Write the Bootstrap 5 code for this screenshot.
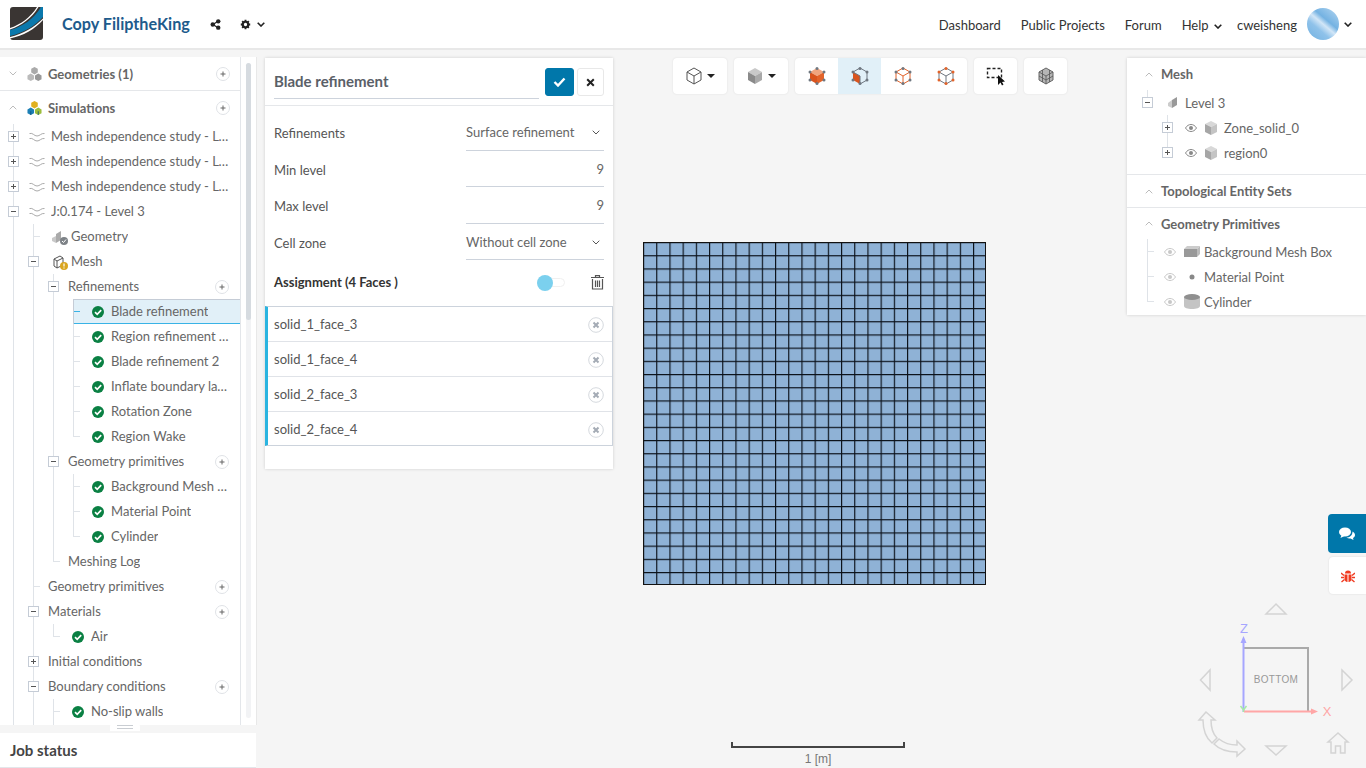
<!DOCTYPE html>
<html lang="en">
<head>
  <meta charset="UTF-8">
  <title>Copy FiliptheKing</title>
  <link href="https://cdn.jsdelivr.net/npm/bootstrap@5.3.0/dist/css/bootstrap.min.css" rel="stylesheet">
  <style>
    html, body { height: 100%; }
    body { background: #f5f5f5; font-family: Lato, "Liberation Sans", sans-serif; font-size: 13px; color: #666; overflow: hidden; }

    /* top bar */
    .top-bar { height: 50px; background: #fff; border-bottom: 2px solid #e8e8e8; padding: 0 14px 0 10px; }
    .brand-logo { width: 33px; height: 33px; margin-top: -1px; }
    .brand-name { font-size: 16.2px; font-weight: 700; color: #1e5b8c; margin-left: 19px; }
    .top-link { color: #333; text-decoration: none; font-size: 13px; padding-top: 4px; }
    .top-links { gap: 20px; }
    .avatar { width: 32px; height: 32px; border-radius: 50%; background: linear-gradient(40deg, #6fb0e0 0%, #8fc2ea 35%, #d2e6f7 50%, #74b2e2 62%, #b7d8f2 100%); }

    /* side panel */
    .work-area { height: 718px; }
    .side-col { width: 257px; flex: none; padding-top: 7px; }
    .side-panel { height: 668px; background: #fff; border-right: 1px solid #e8e8e8; }
    .tree-wrap { width: 241px; border-right: 1px solid #e3e6ea; overflow: hidden; flex: none; }
    .scroll-track { width: 6px; margin: 6px 5px 7px; background: #f2f3f5; border-radius: 3px; }
    .scroll-thumb { height: 257px; background: #d6dbe0; border-radius: 3px; }
    .section-head { height: 34px; padding: 0 10px 0 9px; font-weight: 700; color: #666; }
    .section-head span { padding-top: 2px; }
    .section-head.short-head { height: 33px; }
    .section-line { border-bottom: 1px solid #e5e7ea; }
    .section-head .head-icon { margin: 0 6px 0 10px; }
    .tree-list { list-style: none; margin: 0 0 0 20px; padding: 0; }
    .tree-root { margin-left: 13px; }
    .tree-list > li { background: linear-gradient(#dfe3e8, #dfe3e8) left top / 1px 100% no-repeat; }
    .tree-list > li:last-child { background-size: 1px 13px; }
    .node-row { height: 25px; display: flex; align-items: center; padding-right: 11px; white-space: nowrap; }
    .node-row.selected { background: #e1f0f8; box-shadow: inset 1px 1px 0 #c5ccd6, inset 0 -1px 0 #39b3e6; }
    .node-tog { width: 11px; height: 11px; margin: 0 2px 0 -5px; flex: none; display: block; }
    .node-dash { width: 6px; height: 1px; margin: 0 1px 0 1px; background: #dfe3e8; flex: none; }
    .selected .node-dash { background: #39b3e6; }
    .node-label { margin-left: 7px; min-width: 0; overflow: hidden; text-overflow: ellipsis; }
    .ok-icon { width: 12px; height: 12px; flex: none; margin-left: 11px; }
    .ok-icon + .node-label { margin-left: 7px; }
    .wave-icon { width: 16px; height: 10px; margin-left: 8px; flex: none; }
    .wave-icon + .node-label { margin-left: 6px; }
    .geo-icon { width: 18px; height: 18px; margin-left: 10px; flex: none; }
    .geo-icon + .node-label { margin-left: 2px; }
    .add-btn { width: 14px; height: 14px; margin-left: auto; flex: none; }
    .drag-strip { height: 8px; position: relative; }
    .drag-tab { position: absolute; left: 110px; top: -2px; width: 30px; height: 8px; background: #fff; border-radius: 4px 4px 0 0; }
    .drag-tab::after { content: ""; display: block; margin: 2px 7px 0; height: 4px; border-top: 1px solid #c9cdd2; border-bottom: 1px solid #c9cdd2; }
    .job-status { height: 35px; margin-right: 1px; background: #fff; border-bottom: 1px solid #e3e6ea; padding-left: 10px; font-size: 15px; font-weight: 700; color: #444; }

    /* viewer overlays */
    .viewer { position: relative; flex-grow: 1; }
    .float-card { position: absolute; background: #fff; box-shadow: 0 0 3px rgba(0, 0, 0, .16); }
    .dialog-card { left: 8px; top: 8px; width: 348px; height: 411px; }
    .dialog-head { height: 48px; padding: 10px 9px 0; border-bottom: 1px solid #e5e7ea; }
    .dialog-title { width: 265px; height: 31px; margin-right: 6px; font-size: 15px; font-weight: 700; color: #5a6068; border-bottom: 1px solid #cdd3dc; line-height: 27px; }
    .btn-ok { width: 29px; height: 28px; padding: 0; background: #0077aa; border-color: #0077aa; border-radius: 3px; }
    .btn-cancel { width: 27px; height: 28px; padding: 0; margin-left: 3px; background: #fff; border: 1px solid #e8e8e8; border-radius: 3px; }
    .dialog-body { padding: 8px 9px 0; }
    .form-line { height: 36.5px; color: #555; }
    .form-line > span { padding-top: 3px; }
    .form-value { width: 138px; height: 100%; border-bottom: 1px solid #cdd3dc; color: #666; padding-top: 2px; }
    .assign-line { height: 46px; padding-bottom: 2px; color: #333; }
    .assign-line strong { font-weight: 700; font-size: 13px; padding-top: 2px; }
    .switch-track { width: 28px; height: 9px; margin-right: 26px; position: relative; border: 1px solid #f0f0f0; border-radius: 5px; }
    .switch-knob { position: absolute; left: -1px; top: -4px; width: 16px; height: 16px; border-radius: 50%; background: #7bd0ee; }
    .face-list { border-radius: 0; border: 1px solid #ccd3dc; border-left: 3px solid #2ab4e0; }
    .face-item { height: 35px; padding: 2px 8px 0 6px; border: 0; border-bottom: 1px solid #e0e3e8; color: #555; border-radius: 0; }
    .face-item:last-child { height: 33px; border-bottom: 0; }

    .tool-strip { position: absolute; left: 416px; top: 8px; gap: 7px; }
    .tool-btn { height: 36px; padding: 0; background: #fff; border: 0; border-radius: 4px; box-shadow: 0 0 2px rgba(0, 0, 0, .1); --bs-btn-hover-bg: #fff; }
    .tool-btn.wide { width: 54px; }
    .tool-btn.single { width: 43px; }
    .tool-group { background: #fff; border-radius: 4px; box-shadow: 0 0 2px rgba(0, 0, 0, .1); height: 36px; overflow: hidden; }
    .tool-cell { width: 43px; height: 36px; }
    .tool-cell.active { background: #e1f0f8; }
    .caret-down { width: 0; height: 0; border-left: 4px solid transparent; border-right: 4px solid transparent; border-top: 4px solid #222; margin-left: 4px; }

    .scene-panel { right: 0; top: 8px; width: 239px; height: 257px; overflow: hidden; }
    .scene-head { height: 32px; padding-left: 18px; font-weight: 700; color: #666; gap: 8px; }
    .scene-head span, .scene-row span:not(.node-dash) { padding-top: 2px; }
    .scene-head.last-head { height: 31px; }
    .scene-head.mid-head { height: 33px; }
    .scene-sep { border-bottom: 1px solid #e5e7ea; }
    .scene-row { height: 25px; white-space: nowrap; }
    .scene-group { padding-bottom: 9px; }
    .guide-root { background: linear-gradient(#dfe3e8, #dfe3e8) 20px 0 / 1px 100% no-repeat; }
    .guide-root-end { background: linear-gradient(#dfe3e8, #dfe3e8) 20px 0 / 1px 13px no-repeat; }
    .guide-child { background: linear-gradient(#dfe3e8, #dfe3e8) 40px 0 / 1px 100% no-repeat; }
    .guide-child-end { background: linear-gradient(#dfe3e8, #dfe3e8) 40px 0 / 1px 13px no-repeat; }

    .mesh-plot { position: absolute; left: 386px; top: 192px; width: 343px; height: 343px; }
    .scale-bar { position: absolute; left: 474px; top: 692px; width: 174px; }
    .scale-line { height: 6px; border: 2px solid #444; border-top: 0; }
    .scale-text { font-family: "Liberation Sans", sans-serif; font-size: 12px; color: #777; text-align: center; margin-top: 4px; line-height: 14px; }

    .side-tabs { position: absolute; right: 0; top: 464px; width: 38px; gap: 4px; }
    .tab-chat { height: 39px; background: #0077aa; border-radius: 4px 0 0 4px; }
    .tab-bug { height: 37px; margin-left: 1px; background: #fff; border-radius: 4px 0 0 4px; box-shadow: 0 0 2px rgba(0, 0, 0, .12); }
    .nav-cube { position: absolute; left: 933px; top: 548px; width: 176px; height: 170px; }
  </style>
</head>
<body>

  <svg width="0" height="0" class="d-block" style="position:absolute">
    <defs>
      <symbol id="i-ok" viewBox="0 0 12 12"><circle cx="6" cy="6" r="6" fill="#0a8043"/><path d="M3 6.2l2.2 2.2L9.2 4.2" fill="none" stroke="#fff" stroke-width="1.7"/></symbol>
      <symbol id="i-add" viewBox="0 0 14 14"><circle cx="7" cy="7" r="6.5" fill="#fff" stroke="#dfe2e6"/><path d="M4.5 7h5M7 4.5v5" stroke="#666" stroke-width="1"/></symbol>
      <symbol id="i-plus" viewBox="0 0 11 11"><rect x=".5" y=".5" width="10" height="10" fill="#fff" stroke="#c5ccd6"/><path d="M3 5.5h5M5.5 3v5" stroke="#555"/></symbol>
      <symbol id="i-minus" viewBox="0 0 11 11"><rect x=".5" y=".5" width="10" height="10" fill="#fff" stroke="#c5ccd6"/><path d="M3 5.5h5" stroke="#555"/></symbol>
      <symbol id="i-wave" viewBox="0 0 16 10"><path d="M.5 1.5C4 .5 5 4 8 4s4-3 7.500-2.500M.5 6.500C4 5.500 5 9 8 9s4-3 7.500-2.500" fill="none" stroke="#aaa"/></symbol>
      <symbol id="i-cubes-gray" viewBox="0 0 16 16"><path d="M8 1l3.500 2v4L8 9 4.500 7V3z" fill="#aaa"/><path d="M4 8l3.500 2v4L4 16 .5 14v-4z" fill="#bbb"/><path d="M12 8l3.500 2v4L12 16l-3.500-2v-4z" fill="#999"/></symbol>
      <symbol id="i-cubes-color" viewBox="0 0 16 16"><path d="M8 1l3.500 2v4L8 9 4.500 7V3z" fill="#e0b020"/><path d="M4 8l3.500 2v4L4 16 .5 14v-4z" fill="#1c7fb5"/><path d="M12 8l3.500 2v4L12 16l-3.500-2v-4z" fill="#9cbe3c"/><path d="M4 12v4M12 12v4" stroke="#0d4f75" stroke-width=".8"/></symbol>
      <symbol id="i-chev" viewBox="0 0 8 5"><path d="M.7.7L4 4 7.300.7" fill="none" stroke="currentColor" stroke-width="1"/></symbol>
      <symbol id="i-chev-bold" viewBox="0 0 8 5"><path d="M.7.7L4 4 7.300.7" fill="none" stroke="currentColor" stroke-width="1.600"/></symbol>
      <symbol id="i-eye" viewBox="0 0 12 8"><path d="M.5 4C2 1.500 4 .5 6 .5s4 1 5.500 3.500C10 6.500 8 7.500 6 7.500S2 6.500.5 4z" fill="none" stroke="currentColor"/><circle cx="6" cy="4" r="2" fill="currentColor"/></symbol>
      <symbol id="i-cube" viewBox="0 0 14 14"><path d="M7 0l6 3-6 3-6-3z" fill="#d8d8d8"/><path d="M1 3l6 3v8l-6-3z" fill="#a6a6a6"/><path d="M13 3L7 6v8l6-3z" fill="#c4c4c4"/></symbol>
      <symbol id="i-x-circle" viewBox="0 0 16 16"><circle cx="8" cy="8" r="7.300" fill="#fff" stroke="#d5d9de"/><path d="M5.500 5.500l5 5M10.500 5.500l-5 5" stroke="#a4abb5" stroke-width="2"/></symbol>
    </defs>
  </svg>

  <nav class="top-bar d-flex align-items-center">
    <svg class="brand-logo" viewBox="0 0 33 33">
      <rect width="33" height="33" rx="3" fill="#3a3533"/>
      <path d="M0 23C12 20 24 12 31 0h2v10C25 19 13 26 0 29z" fill="#0a78ac"/>
      <path d="M0 21C10 18 21 10 27 0h1.500C22 11 11 19 0 22.500zM0 30C13 27 25 20 33 11.500V13C25 22 13 29 0 31.500z" fill="#fff"/>
    </svg>
    <span class="brand-name">Copy FiliptheKing</span>
    <svg width="11" height="11" viewBox="0 0 14 14" style="margin-left:20px"><path d="M10 3L4 7l6 4" fill="none" stroke="#222" stroke-width="1.500"/><circle cx="10.500" cy="3" r="2.800" fill="#222"/><circle cx="3.500" cy="7" r="2.800" fill="#222"/><circle cx="10.500" cy="11" r="2.800" fill="#222"/></svg>
    <svg width="11" height="11" viewBox="0 0 14 14" style="margin-left:19px"><circle cx="7" cy="7" r="3.500" fill="none" stroke="#222" stroke-width="2.800"/><path d="M7 1v2.500M7 10.500V13M1 7h2.500M10.500 7H13M2.800 2.800l1.800 1.800M9.400 9.400l1.800 1.800M11.200 2.800L9.400 4.600M4.600 9.400l-1.800 1.800" stroke="#222" stroke-width="2.400"/></svg>
    <svg width="8" height="5" style="color:#222;margin-left:6px"><use href="#i-chev-bold"/></svg>
    <div class="d-flex align-items-center ms-auto">
      <div class="d-flex top-links align-items-center">
        <a class="top-link" href="#">Dashboard</a>
        <a class="top-link" href="#">Public Projects</a>
        <a class="top-link" href="#">Forum</a>
        <a class="top-link" href="#">Help <svg width="8" height="5" style="color:#222;margin-left:2px"><use href="#i-chev-bold"/></svg></a>
      </div>
      <span class="top-link" style="margin-left:15px">cweisheng</span>
      <span class="avatar d-block" style="margin-left:10px"></span>
      <svg width="8" height="5" style="color:#222;margin-left:5px"><use href="#i-chev-bold"/></svg>
    </div>
  </nav>

  <div class="work-area d-flex">
    <aside class="side-col">
      <div class="side-panel d-flex">
        <div class="tree-wrap">
          <div class="section-head section-line d-flex align-items-center">
            <svg width="8" height="5" style="color:#bbb"><use href="#i-chev"/></svg>
            <svg class="head-icon" width="15" height="15"><use href="#i-cubes-gray"/></svg>
            <span>Geometries (1)</span>
            <svg class="add-btn"><use href="#i-add"/></svg>
          </div>
          <div class="section-head short-head d-flex align-items-center">
            <svg width="8" height="5" style="color:#bbb;transform:scaleY(-1)"><use href="#i-chev"/></svg>
            <svg class="head-icon" width="15" height="15"><use href="#i-cubes-color"/></svg>
            <span>Simulations</span>
            <svg class="add-btn"><use href="#i-add"/></svg>
          </div>
          <ul class="tree-list tree-root">
            <li><div class="node-row"><svg class="node-tog"><use href="#i-plus"/></svg><svg class="wave-icon"><use href="#i-wave"/></svg><span class="node-label">Mesh independence study - Level 1</span></div></li>
            <li><div class="node-row"><svg class="node-tog"><use href="#i-plus"/></svg><svg class="wave-icon"><use href="#i-wave"/></svg><span class="node-label">Mesh independence study - Level 2</span></div></li>
            <li><div class="node-row"><svg class="node-tog"><use href="#i-plus"/></svg><svg class="wave-icon"><use href="#i-wave"/></svg><span class="node-label">Mesh independence study - Level 3</span></div></li>
            <li>
              <div class="node-row"><svg class="node-tog"><use href="#i-minus"/></svg><svg class="wave-icon"><use href="#i-wave"/></svg><span class="node-label">J:0.174 - Level 3</span></div>
              <ul class="tree-list">
                <li><div class="node-row"><span class="node-dash"></span>
                  <svg class="geo-icon" viewBox="0 0 18 18"><path d="M5 6l5-3v9l-5 3z" fill="#aaa"/><path d="M1 10l4-2v7l-4-2z" fill="#c8c8c8"/><circle cx="13" cy="13" r="4" fill="#7d8287"/><path d="M11 13l1.500 1.500 2.500-3" fill="none" stroke="#fff"/></svg>
                  <span class="node-label">Geometry</span></div></li>
                <li>
                  <div class="node-row"><svg class="node-tog"><use href="#i-minus"/></svg>
                    <svg class="geo-icon" viewBox="0 0 18 18"><path d="M3 6l6-3 3 2v7l-6 3-3-2z" fill="#fff" stroke="#555"/><path d="M6 8l6-3M6 8v7M3 6l3 2" fill="none" stroke="#555"/><circle cx="13" cy="13" r="4" fill="#d9a520"/><path d="M13 10.500v3M13 14.500v1" stroke="#fff" stroke-width="1.200"/></svg>
                    <span class="node-label">Mesh</span></div>
                  <ul class="tree-list">
                    <li>
                      <div class="node-row"><svg class="node-tog"><use href="#i-minus"/></svg><span class="node-label">Refinements</span><svg class="add-btn"><use href="#i-add"/></svg></div>
                      <ul class="tree-list">
                        <li><div class="node-row selected"><span class="node-dash"></span><svg class="ok-icon"><use href="#i-ok"/></svg><span class="node-label">Blade refinement</span></div></li>
                        <li><div class="node-row"><span class="node-dash"></span><svg class="ok-icon"><use href="#i-ok"/></svg><span class="node-label">Region refinement Wake</span></div></li>
                        <li><div class="node-row"><span class="node-dash"></span><svg class="ok-icon"><use href="#i-ok"/></svg><span class="node-label">Blade refinement 2</span></div></li>
                        <li><div class="node-row"><span class="node-dash"></span><svg class="ok-icon"><use href="#i-ok"/></svg><span class="node-label">Inflate boundary layers</span></div></li>
                        <li><div class="node-row"><span class="node-dash"></span><svg class="ok-icon"><use href="#i-ok"/></svg><span class="node-label">Rotation Zone</span></div></li>
                        <li><div class="node-row"><span class="node-dash"></span><svg class="ok-icon"><use href="#i-ok"/></svg><span class="node-label">Region Wake</span></div></li>
                      </ul>
                    </li>
                    <li>
                      <div class="node-row"><svg class="node-tog"><use href="#i-minus"/></svg><span class="node-label">Geometry primitives</span><svg class="add-btn"><use href="#i-add"/></svg></div>
                      <ul class="tree-list">
                        <li><div class="node-row"><span class="node-dash"></span><svg class="ok-icon"><use href="#i-ok"/></svg><span class="node-label">Background Mesh Box</span></div></li>
                        <li><div class="node-row"><span class="node-dash"></span><svg class="ok-icon"><use href="#i-ok"/></svg><span class="node-label">Material Point</span></div></li>
                        <li><div class="node-row"><span class="node-dash"></span><svg class="ok-icon"><use href="#i-ok"/></svg><span class="node-label">Cylinder</span></div></li>
                      </ul>
                    </li>
                    <li><div class="node-row"><span class="node-dash"></span><span class="node-label">Meshing Log</span></div></li>
                  </ul>
                </li>
                <li><div class="node-row"><span class="node-dash"></span><span class="node-label">Geometry primitives</span><svg class="add-btn"><use href="#i-add"/></svg></div></li>
                <li>
                  <div class="node-row"><svg class="node-tog"><use href="#i-minus"/></svg><span class="node-label">Materials</span><svg class="add-btn"><use href="#i-add"/></svg></div>
                  <ul class="tree-list">
                    <li><div class="node-row"><span class="node-dash"></span><svg class="ok-icon"><use href="#i-ok"/></svg><span class="node-label">Air</span></div></li>
                  </ul>
                </li>
                <li><div class="node-row"><svg class="node-tog"><use href="#i-plus"/></svg><span class="node-label">Initial conditions</span></div></li>
                <li>
                  <div class="node-row"><svg class="node-tog"><use href="#i-minus"/></svg><span class="node-label">Boundary conditions</span><svg class="add-btn"><use href="#i-add"/></svg></div>
                  <ul class="tree-list">
                    <li><div class="node-row"><span class="node-dash"></span><svg class="ok-icon"><use href="#i-ok"/></svg><span class="node-label">No-slip walls</span></div></li>
                    <li><div class="node-row"></div></li>
                  </ul>
                </li>
                <li><div class="node-row"></div></li>
              </ul>
            </li>
            <li><div class="node-row"></div></li>
          </ul>
        </div>
        <div class="scroll-track"><div class="scroll-thumb"></div></div>
      </div>
      <div class="drag-strip"><span class="drag-tab"></span></div>
      <div class="job-status d-flex align-items-center">Job status</div>
    </aside>

    <main class="viewer">
      <svg class="mesh-plot" viewBox="0 0 343 343">
        <defs>
          <pattern id="mesh-cell" width="13.2" height="13.2" patternUnits="userSpaceOnUse">
            <rect width="13.2" height="13.2" fill="#8fb2d6"/>
            <path d="M0 0H13.2M0 0V13.2" stroke="#0a1018" stroke-width="2.300"/>
          </pattern>
        </defs>
        <rect x=".5" y=".5" width="342" height="342" fill="url(#mesh-cell)" stroke="#111"/>
      </svg>

      <section class="float-card dialog-card">
        <div class="dialog-head d-flex align-items-start">
          <div class="dialog-title">Blade refinement</div>
          <button class="btn btn-ok d-flex align-items-center justify-content-center" type="button"><svg width="13" height="10" viewBox="0 0 13 10"><path d="M1.500 5l3.500 3.500L11.500 1.500" fill="none" stroke="#fff" stroke-width="2.400"/></svg></button>
          <button class="btn btn-cancel d-flex align-items-center justify-content-center" type="button"><svg width="9" height="9" viewBox="0 0 9 9"><path d="M1.200 1.200l6.600 6.600M7.800 1.200L1.200 7.800" stroke="#222" stroke-width="2"/></svg></button>
        </div>
        <div class="dialog-body">
          <div class="form-line d-flex align-items-center justify-content-between">
            <span>Refinements</span>
            <div class="form-value d-flex align-items-center justify-content-between">Surface refinement <svg class="me-1" width="8" height="5" style="color:#555"><use href="#i-chev"/></svg></div>
          </div>
          <div class="form-line d-flex align-items-center justify-content-between">
            <span>Min level</span>
            <div class="form-value d-flex align-items-center justify-content-end">9</div>
          </div>
          <div class="form-line d-flex align-items-center justify-content-between">
            <span>Max level</span>
            <div class="form-value d-flex align-items-center justify-content-end">9</div>
          </div>
          <div class="form-line d-flex align-items-center justify-content-between">
            <span>Cell zone</span>
            <div class="form-value d-flex align-items-center justify-content-between">Without cell zone <svg class="me-1" width="8" height="5" style="color:#555"><use href="#i-chev"/></svg></div>
          </div>
          <div class="assign-line d-flex align-items-center">
            <strong class="me-auto">Assignment (4 Faces )</strong>
            <span class="switch-track"><span class="switch-knob"></span></span>
            <svg width="13" height="15" viewBox="0 0 13 15"><path d="M1.500 4v10h10V4M0 2.500h13M4.500 2.500V.7h4v1.800M4.500 5.500v6.500M6.500 5.500v6.500M8.500 5.500v6.500" fill="none" stroke="#555" stroke-width="1.200"/></svg>
          </div>
        </div>
        <div class="list-group face-list">
          <div class="list-group-item face-item d-flex align-items-center justify-content-between">solid_1_face_3 <svg width="16" height="16"><use href="#i-x-circle"/></svg></div>
          <div class="list-group-item face-item d-flex align-items-center justify-content-between">solid_1_face_4 <svg width="16" height="16"><use href="#i-x-circle"/></svg></div>
          <div class="list-group-item face-item d-flex align-items-center justify-content-between">solid_2_face_3 <svg width="16" height="16"><use href="#i-x-circle"/></svg></div>
          <div class="list-group-item face-item d-flex align-items-center justify-content-between">solid_2_face_4 <svg width="16" height="16"><use href="#i-x-circle"/></svg></div>
        </div>
      </section>

      <div class="tool-strip d-flex">
        <button class="btn tool-btn wide d-flex align-items-center justify-content-center" type="button">
          <svg width="18" height="18" viewBox="0 0 18 18"><path d="M9 1l7 4v8l-7 4-7-4V5zM2 5l7 4 7-4M9 9v8" fill="#fff" stroke="#555"/></svg><span class="caret-down"></span>
        </button>
        <button class="btn tool-btn wide d-flex align-items-center justify-content-center" type="button">
          <svg width="18" height="18" viewBox="0 0 18 18"><path d="M9 1l7 4-7 4-7-4z" fill="#c9c9c9"/><path d="M2 5l7 4v8l-7-4z" fill="#8a8a8a"/><path d="M16 5L9 9v8l7-4z" fill="#a9a9a9"/></svg><span class="caret-down"></span>
        </button>
        <div class="tool-group d-flex">
          <div class="tool-cell d-flex align-items-center justify-content-center">
            <svg width="18" height="18" viewBox="0 0 18 18"><path d="M9 1l7 4-7 4-7-4z" fill="#f0a57f"/><path d="M2 5l7 4v8l-7-4z" fill="#d9541e"/><path d="M16 5L9 9v8l7-4z" fill="#e2632a"/><g fill="#6f7780"><circle cx="9" cy="1.500" r="1.500"/><circle cx="2" cy="5" r="1.500"/><circle cx="16" cy="5" r="1.500"/><circle cx="2" cy="13" r="1.500"/><circle cx="16" cy="13" r="1.500"/><circle cx="9" cy="16.500" r="1.500"/></g></svg>
          </div>
          <div class="tool-cell active d-flex align-items-center justify-content-center">
            <svg width="18" height="18" viewBox="0 0 18 18"><path d="M2 5l7 4v8l-7-4z" fill="#d9541e"/><path d="M9 1l7 4v8l-7 4V9L2 5z" fill="none" stroke="#6f7780"/><g fill="#6f7780"><circle cx="9" cy="1.500" r="1.500"/><circle cx="2" cy="5" r="1.500"/><circle cx="16" cy="5" r="1.500"/><circle cx="2" cy="13" r="1.500"/><circle cx="16" cy="13" r="1.500"/><circle cx="9" cy="16.500" r="1.500"/></g></svg>
          </div>
          <div class="tool-cell d-flex align-items-center justify-content-center">
            <svg width="18" height="18" viewBox="0 0 18 18"><path d="M9 1l7 4v8l-7 4-7-4V5zM2 5l7 4 7-4M9 9v8" fill="none" stroke="#e2632a"/><g fill="#6f7780"><circle cx="9" cy="1.500" r="1.500"/><circle cx="2" cy="5" r="1.500"/><circle cx="16" cy="5" r="1.500"/><circle cx="2" cy="13" r="1.500"/><circle cx="16" cy="13" r="1.500"/><circle cx="9" cy="16.500" r="1.500"/></g></svg>
          </div>
          <div class="tool-cell d-flex align-items-center justify-content-center">
            <svg width="18" height="18" viewBox="0 0 18 18"><path d="M9 1l7 4v8l-7 4-7-4V5zM2 5l7 4 7-4M9 9v8" fill="none" stroke="#6f7780"/><g fill="#e2632a"><circle cx="9" cy="1.500" r="1.500"/><circle cx="2" cy="5" r="1.500"/><circle cx="16" cy="5" r="1.500"/><circle cx="2" cy="13" r="1.500"/><circle cx="16" cy="13" r="1.500"/><circle cx="9" cy="16.500" r="1.500"/></g></svg>
          </div>
        </div>
        <button class="btn tool-btn single d-flex align-items-center justify-content-center" type="button">
          <svg width="20" height="20" viewBox="0 0 20 20"><rect x="1.500" y="2.500" width="14" height="9" fill="none" stroke="#222" stroke-width="1.400" stroke-dasharray="3 2"/><path d="M12 9l0 10 2.500-2.500 1.500 3 1.500-1-1.500-2.500 3-.5z" fill="#111"/></svg>
        </button>
        <button class="btn tool-btn single d-flex align-items-center justify-content-center" type="button">
          <svg width="18" height="18" viewBox="0 0 18 18"><path d="M9 1l7 4v8l-7 4-7-4V5z" fill="#b5b5b5" stroke="#666"/><path d="M2 5l7 4 7-4M9 9v8M5.500 3v12M12.500 3v12M2 9l7 4 7-4" fill="none" stroke="#555" stroke-width=".8"/></svg>
        </button>
      </div>

      <section class="float-card scene-panel">
        <div class="scene-group scene-sep">
          <div class="scene-head d-flex align-items-center"><svg width="8" height="5" style="color:#bbb;transform:scaleY(-1)"><use href="#i-chev"/></svg><span>Mesh</span></div>
          <div class="scene-row guide-root-end d-flex align-items-center" style="padding-left:15px">
            <svg width="11" height="11"><use href="#i-minus"/></svg>
            <svg width="14" height="14" viewBox="0 0 14 14" style="margin-left:13px"><path d="M6 4l5-3v8l-5 3z" fill="#999"/><path d="M2 7l4-3v8l-4-2z" fill="#ccc"/></svg>
            <span style="margin-left:5px">Level 3</span>
          </div>
          <div class="scene-row guide-child d-flex align-items-center" style="padding-left:35px">
            <svg width="11" height="11"><use href="#i-plus"/></svg>
            <svg width="12" height="8" style="margin-left:12px;color:#888"><use href="#i-eye"/></svg>
            <svg width="14" height="14" style="margin-left:7px"><use href="#i-cube"/></svg>
            <span style="margin-left:6px">Zone_solid_0</span>
          </div>
          <div class="scene-row guide-child-end d-flex align-items-center" style="padding-left:35px">
            <svg width="11" height="11"><use href="#i-plus"/></svg>
            <svg width="12" height="8" style="margin-left:12px;color:#888"><use href="#i-eye"/></svg>
            <svg width="14" height="14" style="margin-left:7px"><use href="#i-cube"/></svg>
            <span style="margin-left:6px">region0</span>
          </div>
        </div>
        <div class="scene-head mid-head scene-sep d-flex align-items-center"><svg width="8" height="5" style="color:#bbb;transform:scaleY(-1)"><use href="#i-chev"/></svg><span>Topological Entity Sets</span></div>
        <div class="scene-head last-head d-flex align-items-center"><svg width="8" height="5" style="color:#bbb;transform:scaleY(-1)"><use href="#i-chev"/></svg><span>Geometry Primitives</span></div>
        <div class="scene-row guide-root d-flex align-items-center" style="padding-left:20px">
          <span class="node-dash"></span>
          <svg width="12" height="8" style="margin-left:9px;color:#c8c8c8"><use href="#i-eye"/></svg>
          <svg width="16" height="11" viewBox="0 0 16 11" style="margin-left:8px"><path d="M3 0h13l-3 3H0z" fill="#ccc"/><path d="M0 3h13v8H0z" fill="#999"/><path d="M13 3l3-3v8l-3 3z" fill="#bbb"/></svg>
          <span style="margin-left:4px">Background Mesh Box</span>
        </div>
        <div class="scene-row guide-root d-flex align-items-center" style="padding-left:20px">
          <span class="node-dash"></span>
          <svg width="12" height="8" style="margin-left:9px;color:#c8c8c8"><use href="#i-eye"/></svg>
          <svg width="16" height="6" viewBox="0 0 16 6" style="margin-left:8px"><circle cx="8" cy="3" r="2.500" fill="#888"/></svg>
          <span style="margin-left:4px">Material Point</span>
        </div>
        <div class="scene-row guide-root-end d-flex align-items-center" style="padding-left:20px">
          <span class="node-dash"></span>
          <svg width="12" height="8" style="margin-left:9px;color:#c8c8c8"><use href="#i-eye"/></svg>
          <svg width="16" height="15" viewBox="0 0 16 15" style="margin-left:8px"><path d="M0 3v9c0 1.700 3.500 3 8 3s8-1.300 8-3V3z" fill="#c4c4c4"/><ellipse cx="8" cy="3" rx="8" ry="3" fill="#8f8f8f"/></svg>
          <span style="margin-left:4px">Cylinder</span>
        </div>
      </section>

      <div class="scale-bar">
        <div class="scale-line"></div>
        <div class="scale-text">1 [m]</div>
      </div>

      <div class="side-tabs d-flex flex-column">
        <div class="tab-chat d-flex align-items-center justify-content-center">
          <svg width="16" height="13" viewBox="0 0 16 13"><ellipse cx="6" cy="5" rx="6" ry="4.500" fill="#fff"/><path d="M2.500 8L1.500 11l4-2z" fill="#fff"/><path d="M13.500 4.500C15 5.500 16 6.500 16 8c0 1.300-.8 2.300-2 3l.5 2-3-1.500c-1.300.1-3-.3-4-1 3 0 6-2 6-6z" fill="#fff"/></svg>
        </div>
        <div class="tab-bug d-flex align-items-center justify-content-center">
          <svg width="14" height="14" viewBox="0 0 14 14"><path d="M4 4.500a3 3 0 0 1 6 0z" fill="#f03a20"/><path d="M3.500 5.500h3v7.500c-2 0-3-1.500-3-3.500zM7.500 5.500h3v4c0 2-1 3.500-3 3.500z" fill="#f03a20"/><path d="M0 4l3 2.500M14 4l-3 2.500M0 8.500h3M14 8.500h-3M.5 13l3-2.500M13.500 13l-3-2.500" stroke="#f03a20" stroke-width="1.400"/></svg>
        </div>
      </div>

      <svg class="nav-cube" viewBox="1190 598 176 170">
        <g fill="none" stroke="#d4d4d4" stroke-width="1.500">
          <path d="M1266 614h20l-10-10z"/>
          <path d="M1266 746h20l-10 9z"/>
          <path d="M1210 670v20l-9.500-10z"/>
          <path d="M1342 670v20l10-10z"/>
          <path d="M1338 733l-10 9h3v11h4.500v-7h5v7h4.500v-11h3z"/>
          <path d="M1206 712l-7 8h4c0 10 3 18 9 23l5-5c-4-4-6-10-6-18h4z"/>
          <path d="M1245 749l-8-8v4c-7 0-13-2-18-6l-5 5c5 5 14 8 23 8v4z"/>
        </g>
        <path d="M1244 648h64v64" fill="none" stroke="#aaa" stroke-width="2"/>
        <path d="M1243.500 712v-70" stroke="#a6a6ff" stroke-width="2"/>
        <path d="M1243.500 636l-3 7h6z" fill="#a6a6ff"/>
        <path d="M1244 711.500h70" stroke="#ffa6a6" stroke-width="2"/>
        <path d="M1318 711.500l-7-3v6z" fill="#ffa6a6"/>
        <path d="M1240.500 706l3 4 3-4M1243.500 710v2" fill="none" stroke="#a6eaa6" stroke-width="1.500"/>
        <text x="1276" y="683" text-anchor="middle" font-family="Liberation Sans, sans-serif" font-size="10" letter-spacing=".3" fill="#999">BOTTOM</text>
        <text x="1244" y="633" text-anchor="middle" font-family="Liberation Sans, sans-serif" font-size="13" fill="#a6a6ff">Z</text>
        <text x="1327" y="716" text-anchor="middle" font-family="Liberation Sans, sans-serif" font-size="13" fill="#ffa6a6">X</text>
      </svg>
    </main>
  </div>

  <script src="https://cdn.jsdelivr.net/npm/bootstrap@5.3.0/dist/js/bootstrap.bundle.min.js"></script>
</body>
</html>
